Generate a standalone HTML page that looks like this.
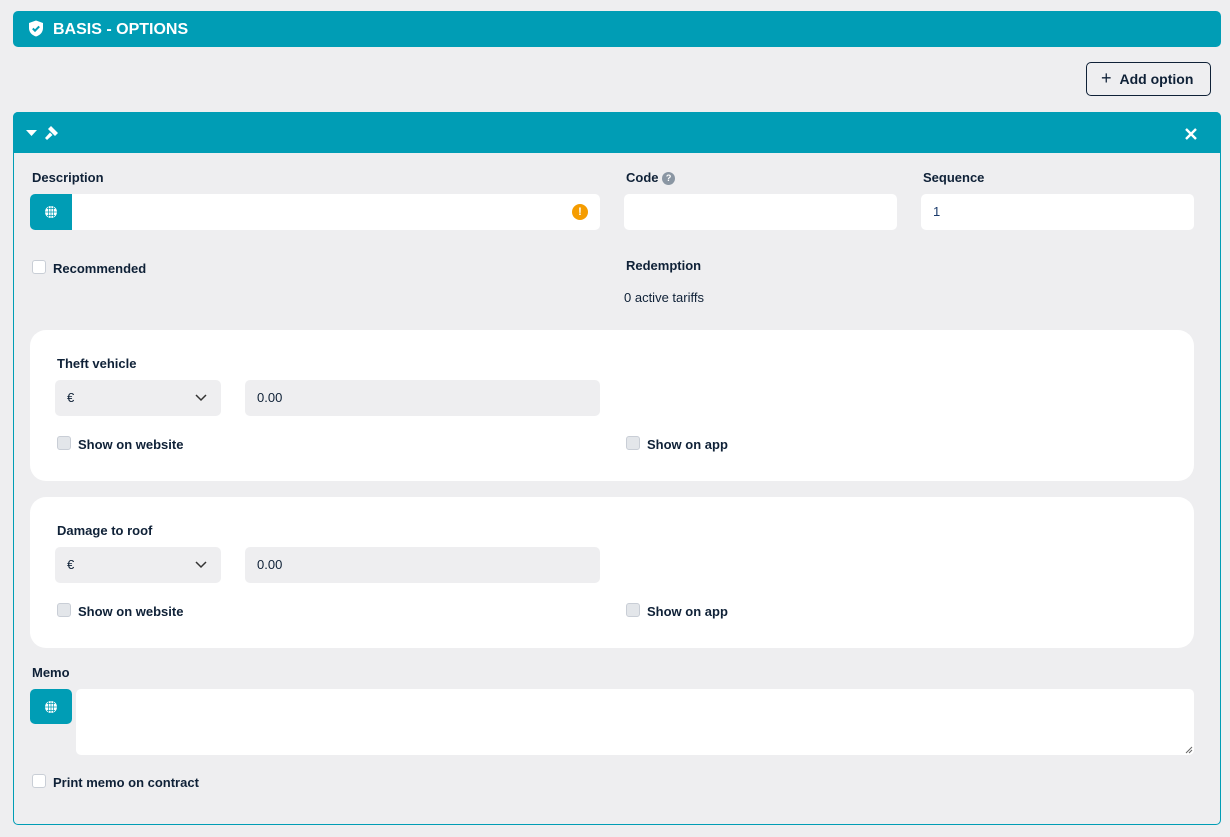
<!DOCTYPE html>
<html><head><meta charset="utf-8"><style>
*{box-sizing:border-box;margin:0;padding:0}
body{width:1230px;height:837px;background:#eeeef0;font-family:"Liberation Sans",sans-serif;color:#0f2137;position:relative;overflow:hidden;font-size:13px}
.a{position:absolute}
.lbl{position:absolute;font-weight:bold;font-size:13px;color:#0f2137}
.inp{position:absolute;background:#fff;border-radius:5px}
.gin{position:absolute;background:#eeeef0;border-radius:5px;font-size:13px;padding-left:12px;line-height:36px}
.cb{position:absolute;width:14px;height:14px;border:1px solid #c9ced6;border-radius:3px;background:#fff}
.cbg{background:#e3e6ea}
.ct{position:absolute;font-weight:bold;font-size:13px}
.card{position:absolute;left:30px;width:1164px;height:151px;background:#fff;border-radius:16px}
.glob{position:absolute;background:#009db5;border-radius:5px 0 0 5px;display:flex;align-items:center;justify-content:center}
</style></head><body>
<div class="a" style="left:13px;top:11px;width:1208px;height:36px;background:#009db5;border-radius:5px"></div>
<svg class="a" style="left:28px;top:20px" width="16" height="17" viewBox="0 0 16 17"><path d="M8 0.5L15 3v5c0 4.5-3.2 7.3-7 8.5C4.2 15.3 1 12.5 1 8V3z" fill="#fff"/><path d="M4.8 8.5l2.2 2.2 4.2-4.3" stroke="#009db5" stroke-width="2" fill="none"/></svg>
<div class="a" style="left:53px;top:21px;color:#fff;font-weight:bold;font-size:16px">BASIS - OPTIONS</div>

<div class="a" style="left:1086px;top:62px;width:125px;height:34px;border:1px solid #0f2137;border-radius:5px;font-weight:bold;font-size:14px;line-height:31px;padding-left:14px"><span style="font-weight:normal;font-size:18px;margin-right:8px">+</span>Add option</div>

<div class="a" style="left:13px;top:112px;width:1208px;height:713px;border:1px solid #009db5;border-radius:5px"></div>
<div class="a" style="left:13px;top:112px;width:1208px;height:41px;background:#009db5;border-radius:5px 5px 0 0"></div>
<svg class="a" style="left:26px;top:130px" width="11" height="7"><path d="M0 0h11L5.5 6z" fill="#fff"/></svg>
<svg class="a" style="left:43px;top:125px" width="17" height="17" viewBox="0 0 17 17"><path d="M8 1l7 7-3 3-7-7z M7 7.5L2 13l2 2 5.5-5z" fill="#fff"/></svg>
<svg class="a" style="left:1185px;top:128px" width="12" height="12"><path d="M1 1l10 10M11 1L1 11" stroke="#fff" stroke-width="2.4"/></svg>

<div class="lbl" style="left:32px;top:170px">Description</div>
<div class="inp" style="left:30px;top:194px;width:570px;height:36px"></div>
<div class="glob" style="left:30px;top:194px;width:42px;height:36px"><svg width="14" height="14" viewBox="0 0 14 14"><circle cx="7" cy="7" r="6" fill="#fff"/><path d="M1 7h12M7 1v12M3 3.5h8M3 10.5h8M4.5 1.8v10.4M9.5 1.8v10.4" stroke="#009db5" stroke-width=".7"/></svg></div>
<div class="a" style="left:572px;top:204px;width:16px;height:16px;border-radius:50%;background:#f59c00;color:#fff;font-weight:bold;font-size:11px;text-align:center;line-height:16px">!</div>

<div class="lbl" style="left:626px;top:170px">Code <span style="display:inline-block;width:13px;height:13px;border-radius:50%;background:#8a96a3;color:#fff;font-size:9px;text-align:center;line-height:13px;vertical-align:1px">?</span></div>
<div class="inp" style="left:624px;top:194px;width:273px;height:36px"></div>
<div class="lbl" style="left:923px;top:170px">Sequence</div>
<div class="inp" style="left:921px;top:194px;width:273px;height:36px;padding-left:12px;line-height:36px;color:#1a3a6b">1</div>

<div class="cb" style="left:32px;top:260px"></div>
<div class="ct" style="left:53px;top:261px">Recommended</div>
<div class="lbl" style="left:626px;top:258px">Redemption</div>
<div class="a" style="left:624px;top:290px">0 active tariffs</div>

<div class="card" style="top:330px"></div>
<div class="lbl" style="left:57px;top:356px">Theft vehicle</div>
<div class="gin" style="left:55px;top:380px;width:166px;height:36px">€</div>
<svg class="a" style="left:195px;top:394px" width="12" height="8"><path d="M1 1l5 5 5-5" stroke="#333" stroke-width="1.5" fill="none"/></svg>
<div class="gin" style="left:245px;top:380px;width:355px;height:36px">0.00</div>
<div class="cb cbg" style="left:57px;top:436px"></div>
<div class="ct" style="left:78px;top:437px">Show on website</div>
<div class="cb cbg" style="left:626px;top:436px"></div>
<div class="ct" style="left:647px;top:437px">Show on app</div>

<div class="card" style="top:497px"></div>
<div class="lbl" style="left:57px;top:523px">Damage to roof</div>
<div class="gin" style="left:55px;top:547px;width:166px;height:36px">€</div>
<svg class="a" style="left:195px;top:561px" width="12" height="8"><path d="M1 1l5 5 5-5" stroke="#333" stroke-width="1.5" fill="none"/></svg>
<div class="gin" style="left:245px;top:547px;width:355px;height:36px">0.00</div>
<div class="cb cbg" style="left:57px;top:603px"></div>
<div class="ct" style="left:78px;top:604px">Show on website</div>
<div class="cb cbg" style="left:626px;top:603px"></div>
<div class="ct" style="left:647px;top:604px">Show on app</div>

<div class="lbl" style="left:32px;top:665px">Memo</div>
<div class="glob" style="left:30px;top:689px;width:42px;height:35px;border-radius:5px"><svg width="14" height="14" viewBox="0 0 14 14"><circle cx="7" cy="7" r="6" fill="#fff"/><path d="M1 7h12M7 1v12M3 3.5h8M3 10.5h8M4.5 1.8v10.4M9.5 1.8v10.4" stroke="#009db5" stroke-width=".7"/></svg></div>
<div class="inp" style="left:76px;top:689px;width:1118px;height:66px"></div>
<svg class="a" style="left:1185px;top:746px" width="8" height="8"><path d="M7 1L1 7M7 4L4 7" stroke="#666" stroke-width="1"/></svg>
<div class="cb" style="left:32px;top:774px"></div>
<div class="ct" style="left:53px;top:775px">Print memo on contract</div>
</body></html>
